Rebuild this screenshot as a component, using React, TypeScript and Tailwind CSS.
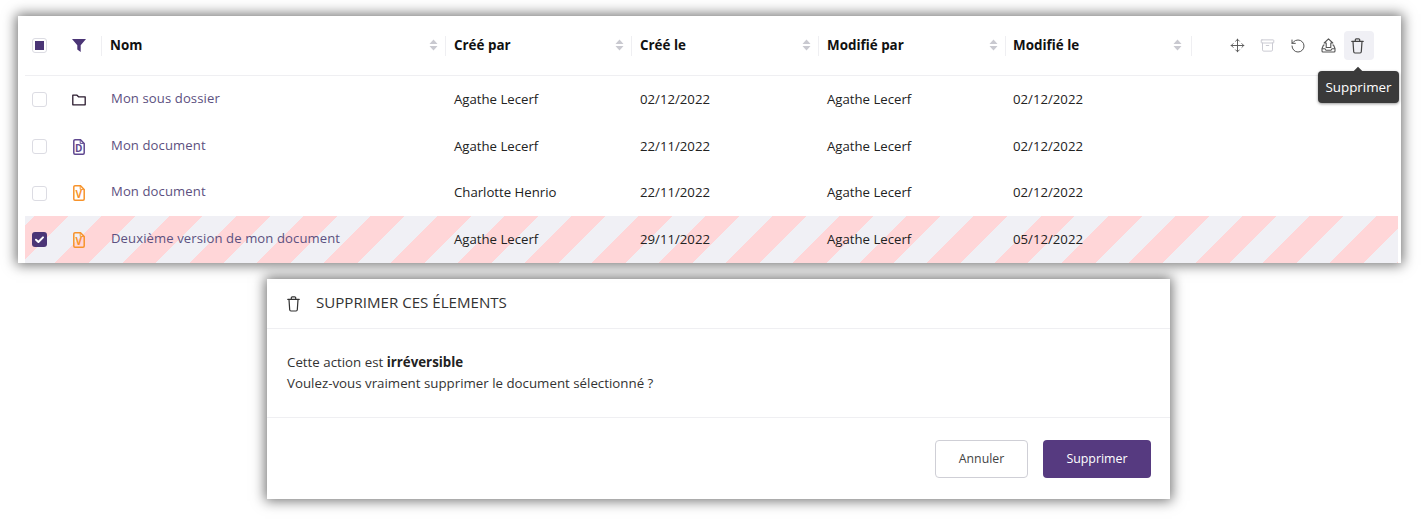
import React from "react";
import { Move, Archive, RotateCcw } from "lucide-react";

const cols = "grid grid-cols-[76px_344px_186px_187px_187px_186px_1fr]";

function TrashIcon({ className }: { className?: string }) {
  return (
    <svg width="13" height="16" viewBox="0 0 13 16" fill="none" stroke="currentColor" strokeWidth="1.2" strokeLinecap="round" strokeLinejoin="round" className={className}>
      <path d="M.8 3.4h11.4" />
      <path d="M4.3 3.2V1.8a1 1 0 0 1 1-1h2.4a1 1 0 0 1 1 1v1.4" />
      <path d="M2 3.6l.7 10.2a1.3 1.3 0 0 0 1.3 1.2h5a1.3 1.3 0 0 0 1.3-1.2L11 3.6" />
    </svg>
  );
}

function Sort() {
  return (
    <svg width="9" height="12" viewBox="0 0 9 12" className="text-[#c9c9d0]" fill="currentColor">
      <path d="M4.5 0.5 8.5 5H.5z" />
      <path d="M4.5 11.5 8.5 7H.5z" />
    </svg>
  );
}

function Head({ label, last }: { label: string; last?: boolean }) {
  return (
    <div className="flex items-center h-full">
      <div className="w-px h-[20px] bg-[#efeff2]" />
      <div className={`flex-1 flex items-center justify-between ${last ? "pr-[9px] pl-[7px]" : "pr-[7px] pl-[8px]"}`}>
        <span className="font-bold text-[13.4px] text-[#111]">{label}</span>
        <Sort />
      </div>
    </div>
  );
}

function Box({ checked }: { checked?: boolean }) {
  if (checked)
    return (
      <div className="w-[15px] h-[15px] rounded-[3px] bg-[#4b3576] flex items-center justify-center">
        <svg width="11" height="11" viewBox="0 0 11 11" fill="none" stroke="white" strokeWidth="2" strokeLinecap="round" strokeLinejoin="round">
          <path d="M2 5.8 4.4 8 9 3.4" />
        </svg>
      </div>
    );
  return <div className="w-[15px] h-[15px] rounded-[3px] border-[1.5px] border-[#dcdce3] bg-white" />;
}

function FileIcon({ letter, color }: { letter: string; color: string }) {
  return (
    <svg width="12" height="16" viewBox="0 0 12 16" fill="none">
      <path d="M2 .8h5.5L11.2 4.5V14a1.2 1.2 0 0 1-1.2 1.2H2A1.2 1.2 0 0 1 .8 14V2A1.2 1.2 0 0 1 2 .8z" stroke={color} strokeWidth="1.5" />
      <path d="M7.2 1v3.4h3.6" stroke={color} strokeWidth="1" />
      <text x="5.8" y="13" textAnchor="middle" fontSize="10" fontWeight="700" fontFamily="'Open Sans', sans-serif" fill={color}>{letter}</text>
    </svg>
  );
}

function FolderIcon() {
  return (
    <svg width="14" height="12" viewBox="0 0 14 12" fill="none" stroke="#2a1a2e" strokeWidth="1.3" strokeLinejoin="round">
      <path d="M.8 1.2h4.2l1.5 1.6h6.7v8H.8z" />
    </svg>
  );
}

function Row({ icon, name, by, created, modBy, mod, striped, checked, tall }: { icon: React.ReactNode; name: string; by: string; created: string; modBy: string; mod: string; striped?: boolean; checked?: boolean; tall?: boolean }) {
  return (
    <div className={`${cols} items-center ${tall ? "h-[47px]" : "h-[46px]"} text-[13.2px] text-[#222] ${striped ? "bg-[repeating-linear-gradient(135deg,#f0f0f5_0,#f0f0f5_7px,#ffd6d8_7px,#ffd6d8_31px,#f0f0f5_31px,#f0f0f5_47.43px)]" : ""}`}>
      <div className="flex items-center pl-[7px] gap-[25px]">
        <Box checked={checked} />
        <div className="w-[14px] flex justify-center">{icon}</div>
      </div>
      <div className="pl-[10px] -mt-[2px] text-[13.1px] text-[#5c5080] tracking-[0.1px]">{name}</div>
      <div className="pl-[9px]">{by}</div>
      <div className="pl-[9px]">{created}</div>
      <div className="pl-[9px]">{modBy}</div>
      <div className="pl-[8px]">{mod}</div>
      <div />
    </div>
  );
}

export default function App() {
  return (
    <div className="w-[1424px] h-[522px] bg-white overflow-hidden font-['Open_Sans',sans-serif] pt-[16px]">
      <div className="relative ml-[18px] w-[1383px] h-[247px] bg-white pl-[7px] pr-[3px] shadow-[0_0_12px_2px_rgba(0,0,0,0.55)]">
        <div className={`${cols} h-[60px] items-center border-b border-[#efeff2]`}>
          <div className="flex items-center pl-[7px] gap-[25px]">
            <div className="w-[15px] h-[15px] rounded-[3px] border-[1.5px] border-[#dcdce3] flex items-center justify-center">
              <div className="w-[9px] h-[9px] bg-[#4b3576]" />
            </div>
            <svg width="14" height="13" viewBox="0 0 14 13" fill="#4b3576">
              <path d="M0 0h14L8.7 6.2V13L5.3 10.6V6.2z" />
            </svg>
          </div>
          <Head label="Nom" />
          <Head label="Créé par" />
          <Head label="Créé le" />
          <Head label="Modifié par" />
          <Head label="Modifié le" last />
          <div className="flex items-center h-full">
            <div className="w-px h-[20px] bg-[#efeff2]" />
            <div className="flex items-center ml-[31px] text-[#555]">
              <div className="w-[29px] flex justify-center"><Move size={15} strokeWidth={1.5} /></div>
              <div className="w-[30px] flex justify-center text-[#c8c8d0]"><Archive size={15} strokeWidth={1.5} /></div>
              <div className="w-[31px] flex justify-center"><RotateCcw size={16} strokeWidth={1.5} /></div>
              <div className="w-[31px] flex justify-center">
                <svg width="15" height="15" viewBox="0 0 15 15" fill="none" stroke="currentColor" strokeWidth="1.1" strokeLinejoin="round">
                  <path d="M7.5 .8 11.8 5H9.8V9.5H5.2V5H3.2z" />
                  <path d="M3.6 7H2.5L1 10.5V13a1 1 0 0 0 1 1h11a1 1 0 0 0 1-1v-2.5L12.5 7H11.4" />
                  <path d="M1 10.8h3l1 1.4h5l1-1.4h3" />
                </svg>
              </div>
              <div className="w-[30px] h-[29px] rounded-[4px] bg-[#f0f0f5] flex items-center justify-center pr-[3px] text-[#444]"><TrashIcon /></div>
            </div>
          </div>
        </div>
        <Row tall icon={<FolderIcon />} name="Mon sous dossier" by="Agathe Lecerf" created="02/12/2022" modBy="Agathe Lecerf" mod="02/12/2022" />
        <Row tall icon={<FileIcon letter="D" color="#5f4890" />} name="Mon document" by="Agathe Lecerf" created="22/11/2022" modBy="Agathe Lecerf" mod="02/12/2022" />
        <Row icon={<FileIcon letter="V" color="#f7932b" />} name="Mon document" by="Charlotte Henrio" created="22/11/2022" modBy="Agathe Lecerf" mod="02/12/2022" />
        <Row tall striped checked icon={<FileIcon letter="V" color="#f7932b" />} name="Deuxième version de mon document" by="Agathe Lecerf" created="29/11/2022" modBy="Agathe Lecerf" mod="05/12/2022" />

        <div className="absolute left-[1300px] top-[55px] w-[81px] h-[32px] rounded-[4px] bg-[#3a3a3a] text-white text-[13.4px] flex items-center justify-center shadow-[0_1px_3px_rgba(0,0,0,0.4)]">
          Supprimer
          <div className="absolute left-[37px] -top-[3px] w-[6px] h-[6px] rotate-45 bg-[#3a3a3a]" />
        </div>
      </div>

      <div className="ml-[267px] mt-[16px] w-[903px] h-[220px] bg-white flex flex-col shadow-[0_0_12px_2px_rgba(0,0,0,0.55)]">
        <div className="h-[50px] flex items-center gap-[16px] pl-[20px] border-b border-[#efeff2] text-[#333] text-[15.1px]">
          <TrashIcon />
          <span className="-mt-[2px]">SUPPRIMER CES ÉLEMENTS</span>
        </div>
        <div className="h-[89px] border-b border-[#efeff2] pl-[20px] pt-[23px] text-[13.3px] leading-[21px] text-[#333]">
          <div>Cette action est <b className="text-[#222]">irréversible</b></div>
          <div>Voulez-vous vraiment supprimer le document sélectionné ?</div>
        </div>
        <div className="flex-1 flex items-center justify-end gap-[15px] pr-[19px] pt-[1px]">
          <button className="w-[93px] h-[38px] rounded-[4px] border border-[#cfcfd6] bg-white text-[12.3px] text-[#444]">Annuler</button>
          <button className="w-[108px] h-[38px] rounded-[4px] bg-[#563a80] text-[12.4px] text-white">Supprimer</button>
        </div>
      </div>
    </div>
  );
}
